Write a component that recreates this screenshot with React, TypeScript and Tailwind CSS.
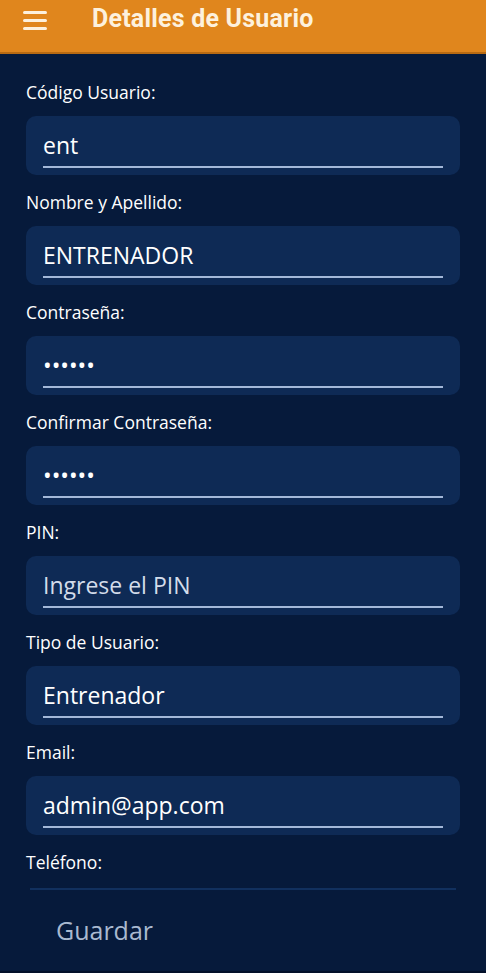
const FIELDS = [
  { label: "Código Usuario:", value: "ent" },
  { label: "Nombre y Apellido:", value: "ENTRENADOR" },
  { label: "Contraseña:", value: "••••••" },
  { label: "Confirmar Contraseña:", value: "••••••" },
  { label: "PIN:", value: "Ingrese el PIN", placeholder: true },
  { label: "Tipo de Usuario:", value: "Entrenador" },
  { label: "Email:", value: "admin@app.com" },
];

function Field({ label, value, placeholder }: { label: string; value: string; placeholder?: boolean }) {
  return (
    <div className="mb-[16px]">
      <p className="text-[17.5px] leading-[22px] text-white mb-[13px]">{label}</p>
      <div className="h-[59px] rounded-[10px] bg-[#0e2a55] px-[17px] flex flex-col">
        <div className="h-[52px] flex items-center border-b-2 border-[#a3b8d8] pt-[9px]">
          <span
            className={
              placeholder
                ? "text-[23px] leading-none text-[#d3dcea]"
                : "text-[23px] leading-none text-white"
            }
          >
            {value}
          </span>
        </div>
      </div>
    </div>
  );
}

export default function App() {
  return (
    <div className="w-[486px] h-[973px] overflow-hidden bg-[#061a3b] font-['Open_Sans',sans-serif] flex flex-col">
      <header className="h-[54px] shrink-0 bg-[#e0861d] border-b-2 border-[#b86a12] flex items-center">
        <div className="ml-[23px] w-[24px] flex flex-col gap-[5px] -mt-[12px]">
          <span className="h-[3px] bg-[#fdf1dd] rounded-sm"></span>
          <span className="h-[3px] bg-[#fdf1dd] rounded-sm"></span>
          <span className="h-[3px] bg-[#fdf1dd] rounded-sm"></span>
        </div>
        <h1 className="ml-[45px] -mt-[14px] font-['Roboto',sans-serif] font-bold text-[25px] text-[#fdf1dd] tracking-[0.2px]">
          Detalles de Usuario
        </h1>
      </header>

      <main className="px-[26px] pt-[27px] flex-1">
        {FIELDS.map((f) => (
          <Field key={f.label} {...f} />
        ))}
        <p className="text-[17.5px] leading-[22px] text-white">Teléfono:</p>
        <div className="mt-[15px] mx-[4px] h-[2px] bg-[#11305e]"></div>
      </main>

      <footer className="h-[83px] shrink-0 flex items-center pl-[56px] border-b-2 border-[#03102a]">
        <span className="text-[25px] text-[#a9b9d0]">Guardar</span>
      </footer>
    </div>
  );
}
